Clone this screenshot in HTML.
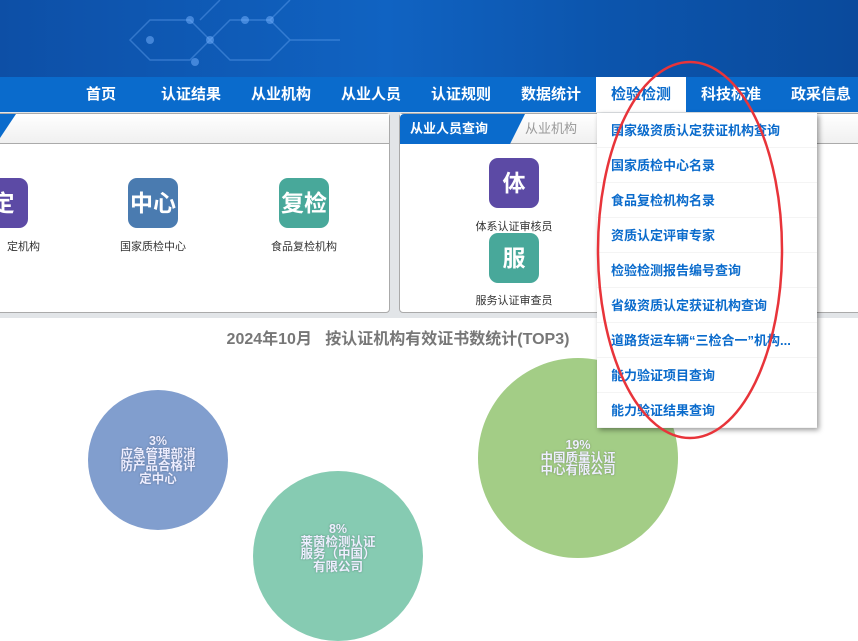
<!DOCTYPE html>
<html><head><meta charset="utf-8"><style>
*{margin:0;padding:0;box-sizing:border-box}
body{width:858px;height:597px;overflow:hidden;position:relative;background:#fff;font-family:"Liberation Sans","Noto Sans CJK SC",sans-serif}
.banner{position:absolute;left:0;top:0;width:858px;height:77px;background:linear-gradient(90deg,#0d4fa6,#1063c2 45%,#0c55ad 70%,#0a4a9c)}
.nav{position:absolute;left:0;top:77px;width:858px;height:35px;background:#0a6bcc}
.nav span{position:absolute;top:0;line-height:35px;color:#fff;font-size:15px;font-weight:bold}
.nav .act{background:#fff;color:#0a6bcc;width:90px;text-align:center;height:36px}
.gray{position:absolute;left:0;top:112px;width:858px;height:206px;background:#e2e5e8}
.panel{position:absolute;top:113px;height:200px;background:#fff;border:1px solid #aaa;border-radius:4px}
.ptab{position:absolute;background:linear-gradient(#fff,#f0f0f0);border-bottom:1px solid #aaa}
.ic{position:absolute;width:50px;height:50px;border-radius:9px;color:#fff;font-weight:bold;font-size:23px;text-align:center;line-height:50px}
.lb{position:absolute;font-size:11px;color:#333;text-align:center;width:100px}
.title{position:absolute;top:325px;left:222px;width:352px;text-align:center;font-size:16px;font-weight:bold;color:#777;white-space:nowrap}
.c{position:absolute;border-radius:50%;color:#eef;font-weight:bold;font-size:12.5px;text-align:center;line-height:12.5px;display:flex;align-items:center;justify-content:center;text-shadow:0 0 2px rgba(0,0,0,.3)}
.dd{position:absolute;left:597px;top:113px;width:220px;height:315px;background:#fff;box-shadow:2px 2px 5px rgba(0,0,0,.4)}
.dd div{height:35px;line-height:35px;padding-left:14px;color:#0a6bcc;font-size:13px;font-weight:bold;border-bottom:1px solid #f4f4f4;white-space:nowrap}
</style></head><body>
<div class="banner"><svg width="858" height="77" style="position:absolute;left:0;top:0" fill="none" stroke="rgba(120,180,255,.35)" stroke-width="1.5"><path d="M150 20 L190 20 L210 40 L190 60 L150 60 L130 40Z M230 20 L270 20 L290 40 L270 60 L230 60 L210 40Z M220 0 L200 20 M270 20 L290 0 M290 40 L340 40"/><g fill="rgba(120,180,255,.5)" stroke="none"><circle cx="190" cy="20" r="4"/><circle cx="210" cy="40" r="4"/><circle cx="150" cy="40" r="4"/><circle cx="270" cy="20" r="4"/><circle cx="245" cy="20" r="4"/><circle cx="195" cy="62" r="4"/></g></svg></div>
<div class="nav">
<span style="left:86px">首页</span><span style="left:161px">认证结果</span><span style="left:251px">从业机构</span><span style="left:341px">从业人员</span><span style="left:431px">认证规则</span><span style="left:521px">数据统计</span><span class="act" style="left:596px">检验检测</span><span style="left:701px">科技标准</span><span style="left:791px">政采信息</span>
</div>
<div class="gray"></div>
<div class="panel" style="left:-5px;width:395px">
<div class="ptab" style="left:0;top:0;width:393px;height:30px"></div>
<div style="position:absolute;left:0;top:0;width:20px;height:30px;background:#0a6bcc;clip-path:polygon(0 0,100% 0,0 100%)"></div>
</div>
<div class="ic" style="left:-22px;top:178px;background:#5c4aa5">定</div><div class="lb" style="left:-30px;top:238px;text-align:right;width:70px">定机构</div>
<div class="ic" style="left:128px;top:178px;background:#4a7bb0">中心</div><div class="lb" style="left:103px;top:238px">国家质检中心</div>
<div class="ic" style="left:279px;top:178px;background:#48a89a">复检</div><div class="lb" style="left:254px;top:238px">食品复检机构</div>
<div class="panel" style="left:399px;width:470px">
<div class="ptab" style="left:0;top:0;width:470px;height:30px"></div>
<div style="position:absolute;left:0;top:0;width:125px;height:30px;background:#0a6bcc;border-radius:4px 0 0 0;clip-path:polygon(0 0,100% 0,88% 100%,0 100%);color:#fff;font-size:13px;font-weight:bold;line-height:30px;padding-left:10px">从业人员查询</div>
<div style="position:absolute;left:125px;top:0;line-height:30px;font-size:13px;color:#999">从业机构</div>
</div>
<div class="ic" style="left:489px;top:158px;background:#5c4aa5">体</div><div class="lb" style="left:464px;top:218px">体系认证审核员</div>
<div class="ic" style="left:489px;top:233px;background:#48a89a">服</div><div class="lb" style="left:464px;top:292px">服务认证审查员</div>
<div class="title">2024年10月&nbsp;&nbsp;&nbsp;按认证机构有效证书数统计(TOP3)</div>
<div class="c" style="left:88px;top:390px;width:140px;height:140px;background:#819ece">3%<br>应急管理部消<br>防产品合格评<br>定中心</div>
<div class="c" style="left:253px;top:471px;width:170px;height:170px;background:#86cbb2;align-items:flex-start;padding-top:52px">8%<br>莱茵检测认证<br>服务（中国）<br>有限公司</div>
<div class="c" style="left:478px;top:358px;width:200px;height:200px;background:#a3cd86">19%<br>中国质量认证<br>中心有限公司</div>
<div class="dd">
<div>国家级资质认定获证机构查询</div><div>国家质检中心名录</div><div>食品复检机构名录</div><div>资质认定评审专家</div><div>检验检测报告编号查询</div><div>省级资质认定获证机构查询</div><div>道路货运车辆“三检合一”机构...</div><div>能力验证项目查询</div><div>能力验证结果查询</div>
</div>
<svg width="858" height="597" style="position:absolute;left:0;top:0"><ellipse cx="690" cy="250" rx="92" ry="188" fill="none" stroke="#e8343a" stroke-width="2.5"/></svg>
</body></html>
